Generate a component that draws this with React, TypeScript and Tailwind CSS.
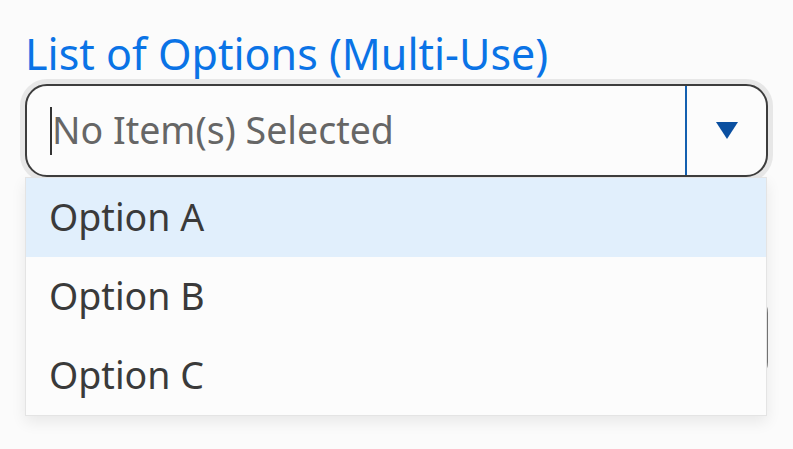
import { useState } from "react";

const options = ["Option A", "Option B", "Option C"];

export default function App() {
  const [active] = useState(0);

  return (
    <div
      className="min-h-[449px] w-full bg-[#fbfbfb] px-[25px] pt-[27px]"
      style={{ fontFamily: '"Noto Sans", "Open Sans", sans-serif' }}
    >
      <label className="block text-[43px] leading-[54px] text-[#0a73e6]">
        List of Options (Multi-Use)
      </label>

      <div className="relative mt-[3px]">
        <div className="flex h-[93px] items-stretch rounded-[22px] border-2 border-[#3d3d3d] bg-[#fcfcfc] shadow-[0_0_0_5px_#e7e7e7]">
          <div className="flex flex-1 items-center pl-[23px]">
            <span className="h-[48px] w-[2px] bg-[#333]" />
            <span className="text-[37.5px] text-[#666]">No Item(s) Selected</span>
          </div>
          <div className="w-[2px] bg-[#1460b0]" />
          <button className="flex w-[79px] items-center justify-center">
            <svg width="22" height="17" viewBox="0 0 22 17" aria-hidden="true">
              <polygon points="0,0 22,0 11,17" fill="#0a4fa0" />
            </svg>
          </button>
        </div>

        <div className="mt-[114px] h-[93px] rounded-[22px] border-2 border-[#777] bg-[#fcfcfc]" />

        <ul className="absolute left-0 right-[1px] top-[93px] border border-[#e4e4e4] bg-[#fcfcfc] shadow-[0_6px_14px_rgba(0,0,0,0.08)]">
          {options.map((o, i) => (
            <li
              key={o}
              className={`flex h-[79px] items-center pl-[23px] text-[37.5px] text-[#3a3a3a] ${
                i === active ? "bg-[#e1effc]" : ""
              }`}
            >
              {o}
            </li>
          ))}
        </ul>
      </div>
    </div>
  );
}
